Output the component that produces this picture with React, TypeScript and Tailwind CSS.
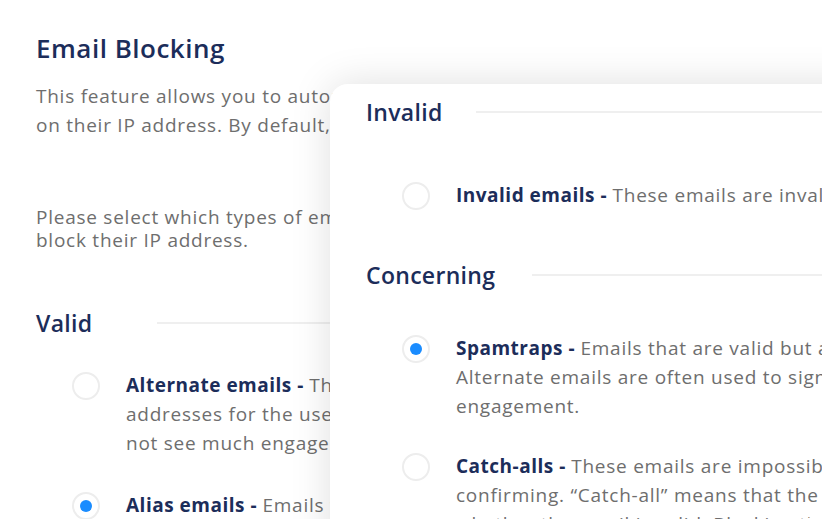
import React from "react";

function Radio({ checked = false }: { checked?: boolean }) {
  return (
    <span className="mt-[0.5px] flex h-[28px] w-[28px] shrink-0 items-center justify-center rounded-full border-2 border-[#ededed] bg-white">
      {checked && <span className="h-[12px] w-[12px] rounded-full bg-[#1a8cff]" />}
    </span>
  );
}

function Option({
  checked,
  label,
  lines,
  className = "",
}: {
  checked?: boolean;
  label: string;
  lines: string[];
  className?: string;
}) {
  return (
    <div className={`flex items-start gap-[26px] pl-[36px] ${className}`}>
      <Radio checked={checked} />
      <div className="whitespace-nowrap text-[19px] leading-[29px] tracking-[0.75px] text-[#6e6e6e]">
        {lines.map((l, i) => (
          <div key={i}>
            {i === 0 && <span className="font-bold tracking-[0.5px] text-[#1c2d5a]">{label} - </span>}
            {l}
          </div>
        ))}
      </div>
    </div>
  );
}

function SectionHeader({ title, labelW, className = "" }: { title: string; labelW: string; className?: string }) {
  return (
    <div className={`flex items-center ${className}`}>
      <span className={`shrink-0 text-[23px] font-semibold leading-[30px] tracking-[0.3px] text-[#1c2d5a] ${labelW}`}>{title}</span>
      <span className="h-[2px] flex-1 bg-[#efefef]" />
    </div>
  );
}

export default function App() {
  return (
    <div className="relative h-[519px] w-[822px] overflow-hidden rounded-[20px] bg-white" style={{ fontFamily: '"Open Sans", sans-serif' }}>
      <div className="w-[900px] pl-[36px] pt-[32px]">
        <h1 className="text-[26px] font-semibold leading-[32px] tracking-[0.5px] text-[#1c2d5a]">Email Blocking</h1>
        <p className="mt-[18px] whitespace-nowrap text-[19px] leading-[29px] tracking-[0.75px] text-[#6e6e6e]">
          This feature allows you to automatically block sign-ups from users based
          <br />
          on their IP address. By default, no email types are blocked.
        </p>
        <p className="mt-[66px] whitespace-nowrap text-[19px] leading-[23px] tracking-[0.75px] text-[#6e6e6e]">
          Please select which types of emails you would like to automatically
          <br />
          block their IP address.
        </p>
        <SectionHeader title="Valid" labelW="w-[121px]" className="mt-[56px]" />
        <Option
          className="mt-[33px]"
          label="Alternate emails"
          lines={[
            "These are secondary email",
            "addresses for the user. These addresses often",
            "not see much engagement.",
          ]}
        />
        <Option className="mt-[33px]" checked label="Alias emails" lines={["Emails that forward to another inbox."]} />
      </div>

      <div className="absolute left-[330px] top-[84px] h-[500px] w-[600px] rounded-[18px] bg-white pl-[36px] pt-[13px] shadow-[0_0_40px_rgba(0,0,0,0.13)]">
        <SectionHeader title="Invalid" labelW="w-[110px]" />
        <Option
          className="mt-[54px]"
          label="Invalid emails"
          lines={["These emails are invalid and will bounce."]}
        />
        <SectionHeader title="Concerning" labelW="w-[166px]" className="mt-[50px]" />
        <Option
          className="mt-[44px]"
          checked
          label="Spamtraps"
          lines={[
            "Emails that are valid but are used to catch spammers.",
            "Alternate emails are often used to sign up and see little",
            "engagement.",
          ]}
        />
        <Option
          className="mt-[31px]"
          label="Catch-alls"
          lines={[
            "These emails are impossible to validate without",
            "confirming. “Catch-all” means that the domain accepts",
            "whether the email is valid. Blocking these is optional.",
          ]}
        />
      </div>
    </div>
  );
}
